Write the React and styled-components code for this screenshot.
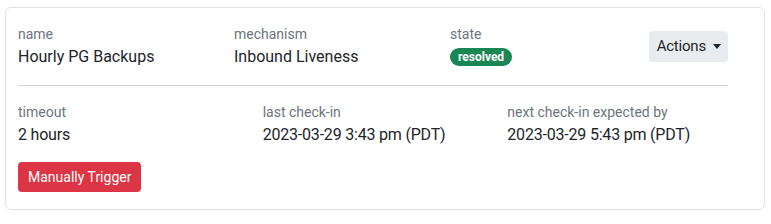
import React from "react";
import styled, { createGlobalStyle } from "styled-components";

const GlobalStyle = createGlobalStyle`
  body {
    margin: 0;
    background: #fff;
    font-family: Roboto, "Noto Sans", sans-serif;
    color: #212529;
  }
`;

const Page = styled.div`
  padding: 7px 6px 0 5px;
`;

const Card = styled.div`
  width: 760px;
  box-sizing: border-box;
  border: 1px solid #dee2e6;
  border-radius: 6px;
  padding: 16px 12px 17px;
`;

const TopSection = styled.div`
  margin-right: 24px;
  padding-bottom: 16px;
  border-bottom: 1px solid #ced4da;
  display: grid;
  grid-template-columns: 216px 216px 1fr auto;
  align-items: center;
`;

const BottomSection = styled.div`
  padding-top: 16px;
  display: grid;
  grid-template-columns: repeat(3, 1fr);
`;

const Field = styled.div`
  display: flex;
  flex-direction: column;
  align-items: flex-start;
`;

const Label = styled.div`
  font-size: 14px;
  line-height: 20px;
  color: #6c757d;
  margin-bottom: 1px;
`;

const Value = styled.div`
  font-size: 16px;
  line-height: 24px;
  height: 24px;
  display: flex;
  align-items: center;
  letter-spacing: ${(p) => (p.$tight ? "-0.2px" : "0")};
`;

const Badge = styled.span`
  display: inline-block;
  background: ${(p) => p.$color || "#198754"};
  color: #fff;
  font-size: 12px;
  font-weight: 700;
  line-height: 18px;
  padding: 0 8px;
  border-radius: 9px;
`;

const DropButton = styled.button`
  font-family: inherit;
  font-size: 15px;
  line-height: 23px;
  color: #212529;
  background: #e9ecef;
  border: 0;
  border-radius: 4px;
  padding: 4px 7px 4px 8px;
  display: flex;
  align-items: center;
  gap: 7px;
  letter-spacing: -0.2px;

  &::after {
    content: "";
    border-top: 5px solid #212529;
    border-left: 4px solid transparent;
    border-right: 4px solid transparent;
  }
`;

const Footer = styled.div`
  margin-top: 15px;
`;

const Button = styled.button`
  font-family: inherit;
  font-size: 14px;
  line-height: 22px;
  padding: 4px 10px;
  color: #fff;
  background: ${(p) => (p.$variant === "danger" ? "#dc3545" : "#0d6efd")};
  border: 0;
  border-radius: 4px;
`;

const details = [
  { label: "timeout", value: "2 hours" },
  { label: "last check-in", value: "2023-03-29 3:43 pm (PDT)" },
  { label: "next check-in expected by", value: "2023-03-29 5:43 pm (PDT)" },
];

export default function App() {
  return (
    <Page>
      <GlobalStyle />
      <Card>
        <TopSection>
          <Field>
            <Label>name</Label>
            <Value>Hourly PG Backups</Value>
          </Field>
          <Field>
            <Label>mechanism</Label>
            <Value>Inbound Liveness</Value>
          </Field>
          <Field>
            <Label>state</Label>
            <Value>
              <Badge>resolved</Badge>
            </Value>
          </Field>
          <DropButton>Actions</DropButton>
        </TopSection>
        <BottomSection>
          {details.map((d) => (
            <Field key={d.label}>
              <Label>{d.label}</Label>
              <Value $tight>{d.value}</Value>
            </Field>
          ))}
        </BottomSection>
        <Footer>
          <Button $variant="danger">Manually Trigger</Button>
        </Footer>
      </Card>
    </Page>
  );
}
